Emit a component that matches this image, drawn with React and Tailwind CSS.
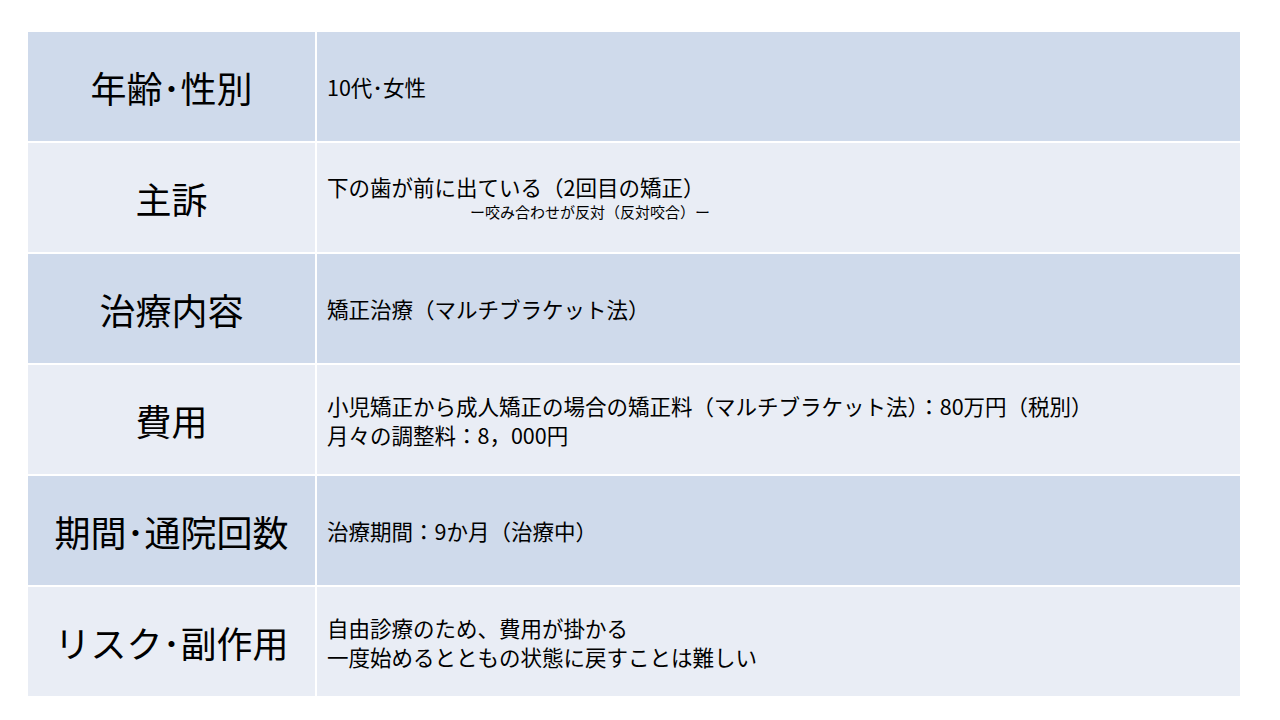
import React from 'react';

const rows = [
  { label: '年齢･性別', lines: ['10代･女性'] },
  { label: '主訴', lines: ['下の歯が前に出ている（2回目の矯正）'], sub: 'ー咬み合わせが反対（反対咬合）ー' },
  { label: '治療内容', lines: ['矯正治療（マルチブラケット法）'] },
  {
    label: '費用',
    lines: ['小児矯正から成人矯正の場合の矯正料（マルチブラケット法）：80万円（税別）', '月々の調整料：8，000円'],
  },
  { label: '期間･通院回数', lines: ['治療期間：9か月（治療中）'] },
  {
    label: 'リスク･副作用',
    lines: ['自由診療のため、費用が掛かる', '一度始めるとともの状態に戻すことは難しい'],
  },
];

export default function App() {
  return (
    <div
      className="w-[1280px] h-[720px] bg-white pt-[32px] pl-[28px] text-black"
      style={{ fontFamily: '"Noto Sans CJK JP", "Noto Sans", sans-serif' }}
    >
      <div className="grid w-[1212px] grid-cols-[287px_1fr] gap-[2px]">
        {rows.map((row, i) => {
          const bg = i % 2 === 0 ? 'bg-[#cfdaeb]' : 'bg-[#e9edf5]';
          return (
            <React.Fragment key={row.label}>
              <div className={`${bg} h-[109px] flex items-center justify-center`}>
                <span className="text-[36px] leading-none">{row.label}</span>
              </div>
              <div className={`${bg} h-[109px] flex flex-col justify-center pl-[10px]`}>
                {row.lines.map((line) => (
                  <div key={line} className="text-[21.5px] leading-[29px]">
                    {line}
                  </div>
                ))}
                {row.sub && (
                  <div className="ml-[143px] text-[15px] leading-[22px]">{row.sub}</div>
                )}
              </div>
            </React.Fragment>
          );
        })}
      </div>
    </div>
  );
}
